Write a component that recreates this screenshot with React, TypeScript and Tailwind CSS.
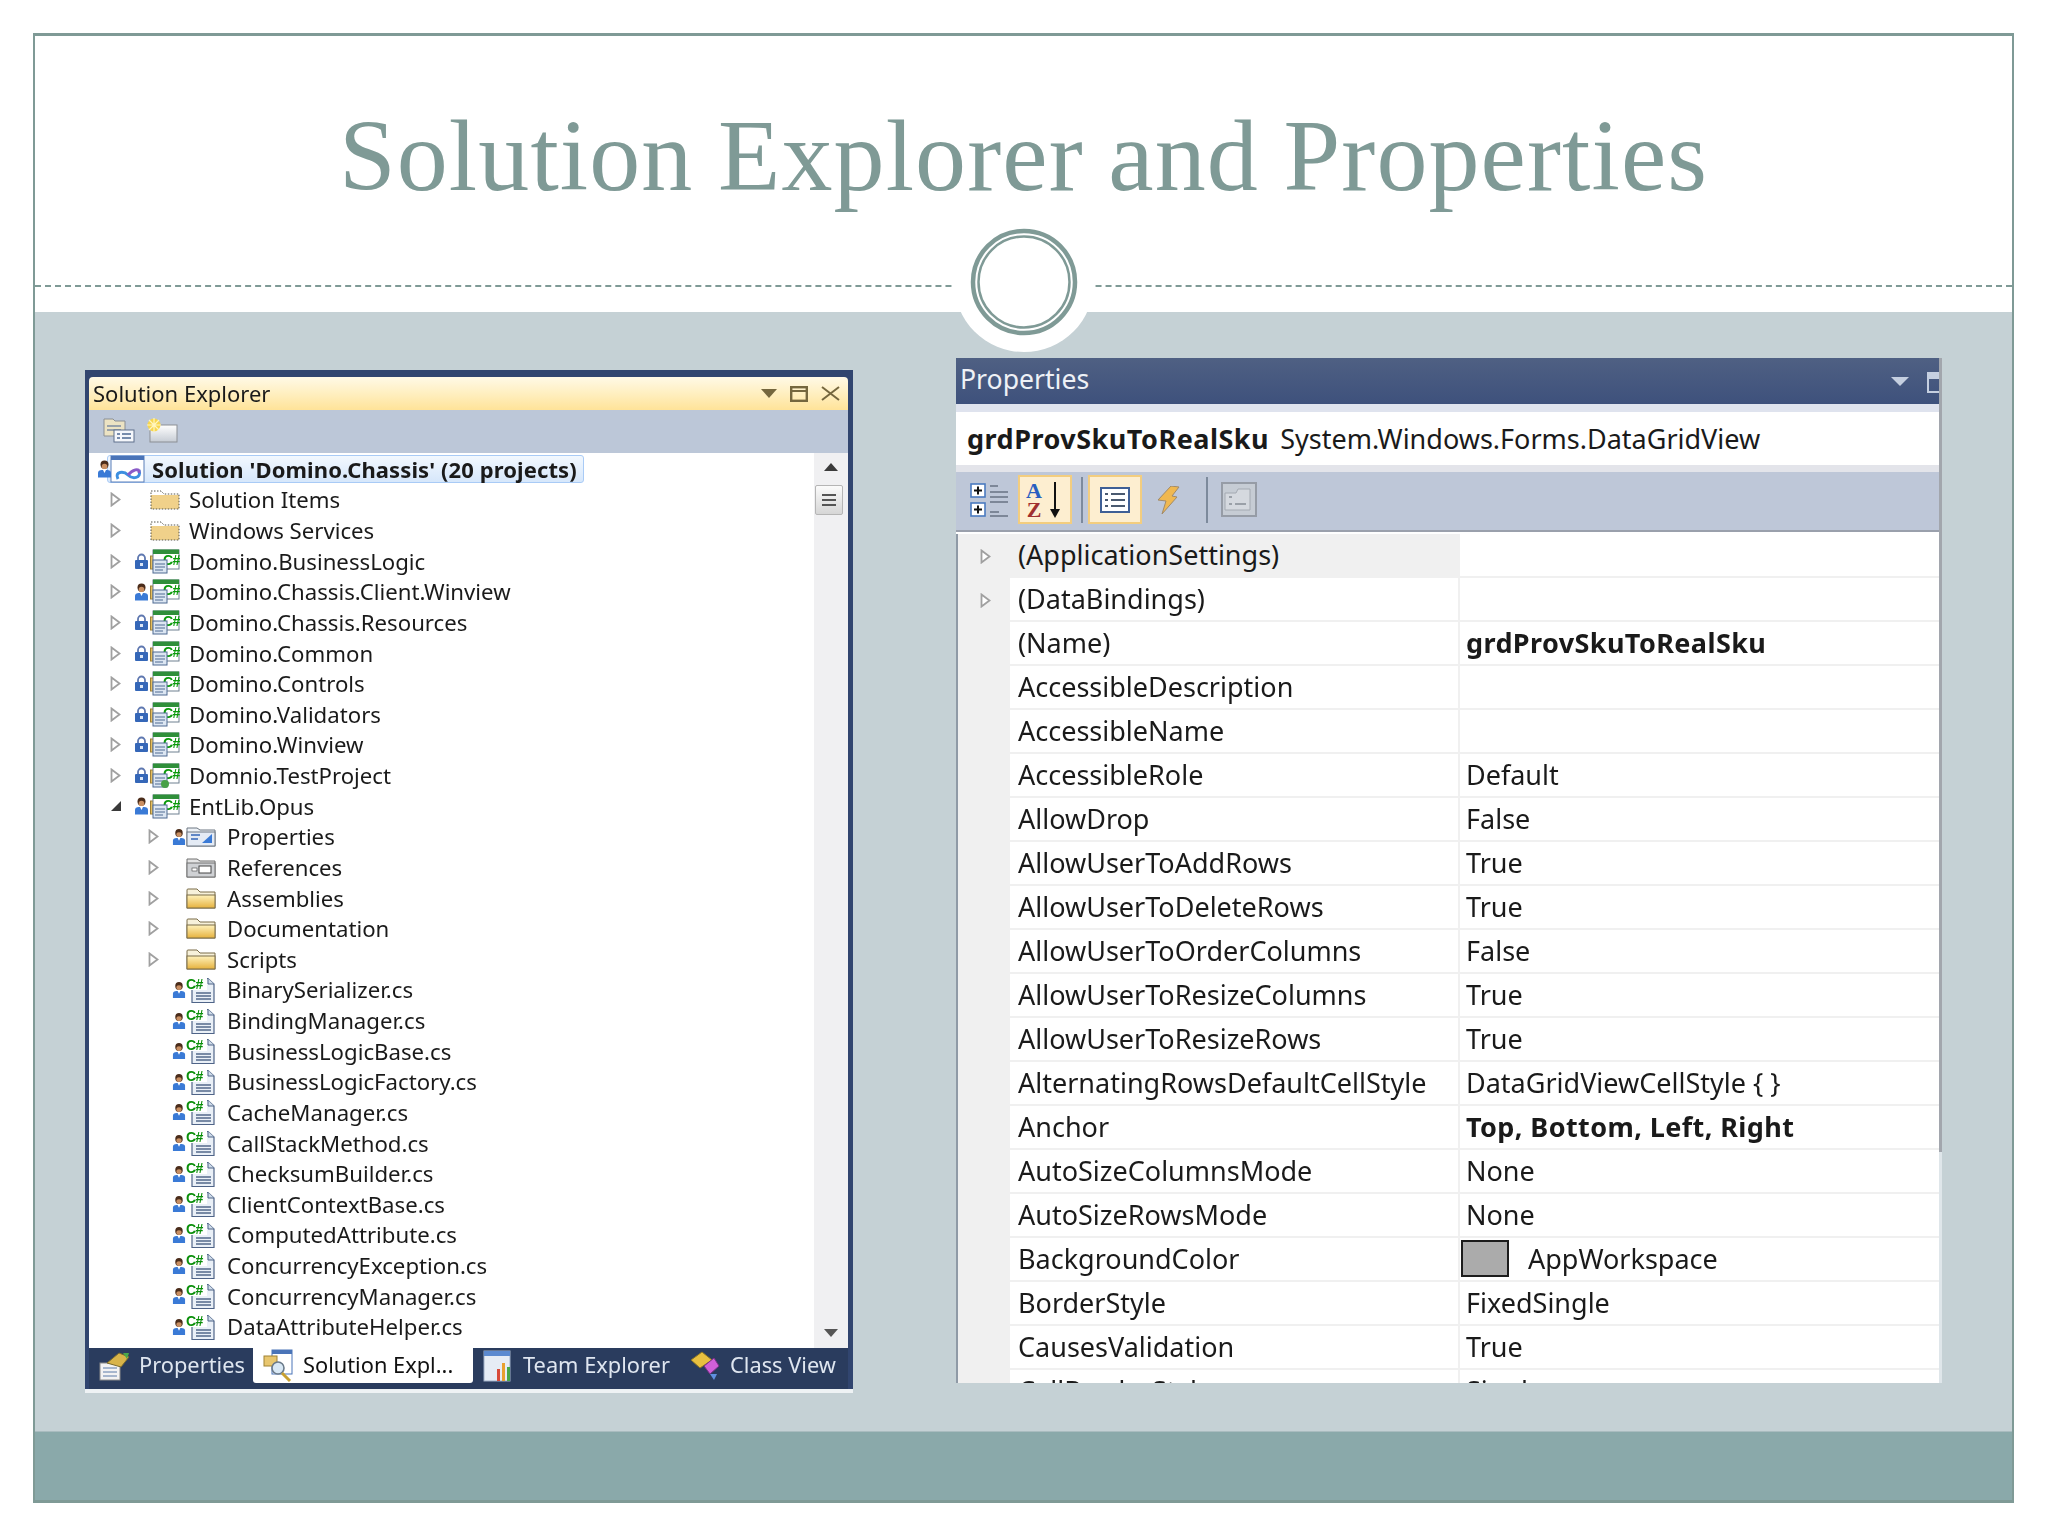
import React from "react";

const Expander = ({ open }: { open?: boolean }) =>
  open ? (
    <svg width="12" height="12" viewBox="0 0 12 12" className="block">
      <path d="M1 11 L11 11 L11 1 Z" fill="#3a3a3a" />
    </svg>
  ) : (
    <svg width="11" height="15" viewBox="0 0 11 15" className="block">
      <path d="M1.5 1.5 L9.5 7.5 L1.5 13.5 Z" fill="#fff" stroke="#a0a0a0" strokeWidth="1.8" />
    </svg>
  );

const Lock = () => (
  <svg width="15" height="17" viewBox="0 0 15 17" className="block">
    <path d="M4 8 V5 a3.5 3.5 0 0 1 7 0 V8" fill="none" stroke="#5f78b0" strokeWidth="1.8" />
    <rect x="1" y="7" width="13" height="9" rx="1" fill="#3567b8" />
    <rect x="6" y="10" width="3" height="3" fill="#dbe6f7" />
  </svg>
);

const User = () => (
  <svg width="15" height="18" viewBox="0 0 15 18" className="block">
    <ellipse cx="7.5" cy="4.6" rx="4" ry="4.2" fill="#4a2c1a" />
    <ellipse cx="7.5" cy="6.4" rx="2.8" ry="2.6" fill="#c98f62" />
    <path d="M1 17.5 V13 Q1 10 5 10 H10 Q14 10 14 13 V17.5 Z" fill="#3a7ad6" />
    <path d="M6 10 H9 L7.5 13 Z" fill="#fff" />
  </svg>
);

const CsProject = ({ gear }: { gear?: boolean }) => (
  <svg width="30" height="25" viewBox="0 0 30 25" className="block">
    <rect x="0.5" y="7" width="8" height="13" fill="#e6bf60" stroke="#a08238" />
    <rect x="3" y="1" width="26" height="19" fill="#fff" stroke="#6f8090" />
    <rect x="3" y="0.5" width="26" height="4.5" fill="#2f8f3a" />
    <text x="13" y="16" fontSize="14" fontWeight="700" fill="#0a9a0a" fontFamily="Liberation Sans, sans-serif" letterSpacing="-0.5">C#</text>
    <rect x="3" y="11" width="14" height="13" fill="#dce6f2" stroke="#4f6a92" />
    <path d="M5 15 H15 M5 18 H15 M5 21 H13" stroke="#4f6a92" strokeWidth="1.2" />
    {gear && <circle cx="15" cy="21" r="4" fill="#48a048" />}
  </svg>
);

const CsFile = () => (
  <svg width="29" height="26" viewBox="0 0 29 26" className="block">
    <path d="M6 1.5 H22 L28 7 V25.5 H6 Z" fill="#eaf0f7" stroke="#4f6488" strokeWidth="1.2" />
    <path d="M22 1.5 V7 H28" fill="#cfdcea" stroke="#4f6488" />
    <path d="M10 16 H25 M10 19 H25 M10 22 H25" stroke="#53688a" strokeWidth="1.4" />
    <rect x="0" y="1" width="21" height="12" fill="#fff" />
    <text x="0" y="12" fontSize="14" fontWeight="700" fill="#0a8f0a" fontFamily="Liberation Sans, sans-serif" letterSpacing="-0.5">C#</text>
  </svg>
);

const FolderIcon = () => (
  <svg width="30" height="21" viewBox="0 0 30 21" className="block">
    <defs>
      <linearGradient id="fg" x1="0" y1="0" x2="0" y2="1">
        <stop offset="0" stopColor="#fff2bc" />
        <stop offset="1" stopColor="#e6b23e" />
      </linearGradient>
    </defs>
    <path d="M1 20 V2 Q1 1 2 1 H11 L14 4 H29 V20 Z" fill="#f7f1da" stroke="#7a6c48" />
    <rect x="1" y="7" width="28" height="13" fill="url(#fg)" stroke="#7a6c48" />
  </svg>
);

const DottedFolder = () => (
  <svg width="30" height="21" viewBox="0 0 30 21" className="block">
    <rect x="1" y="6" width="28" height="14" fill="#f0d18a" />
    <path d="M1 20 V2 H11 L14 5 H29 V20 Z" fill="none" stroke="#55554a" strokeDasharray="1.5 1.5" />
  </svg>
);

const PropsFolder = () => (
  <svg width="30" height="21" viewBox="0 0 30 21" className="block">
    <path d="M1 20 V2 H11 L14 4 H29 V20 Z" fill="#eef2f7" stroke="#6d7782" />
    <rect x="1" y="6" width="28" height="14" fill="#e4ebf5" stroke="#6d7782" />
    <path d="M5 9 H14 M5 13 H12" stroke="#3567b8" strokeWidth="1.6" />
    <path d="M16 17 L26 8 V17 Z" fill="#3a7ad6" />
  </svg>
);

const RefsFolder = () => (
  <svg width="30" height="21" viewBox="0 0 30 21" className="block">
    <path d="M1 20 V2 H11 L14 4 H29 V20 Z" fill="#e4e4e4" stroke="#707070" />
    <rect x="1" y="6" width="28" height="14" fill="#cfd1d4" stroke="#707070" />
    <rect x="13" y="9" width="12" height="7" fill="#fff" stroke="#444" />
    <rect x="6" y="11" width="5" height="3" fill="#fff" stroke="#444" strokeWidth="0.6" />
  </svg>
);

const SolutionIcon = () => (
  <svg width="36" height="28" viewBox="0 0 36 28" className="block">
    <rect x="1" y="1" width="33" height="26" fill="#fff" stroke="#5b7fb8" />
    <rect x="1" y="1" width="33" height="4" fill="#4a74b8" />
    <path d="M8 24 C4 16 14 16 18 20 C22 24 32 24 29 15" fill="none" stroke="#3d8fe0" strokeWidth="3" />
    <path d="M18 20 C22 15 30 12 29 18" fill="none" stroke="#8a5bc8" strokeWidth="3" />
  </svg>
);

type Kind = "cs" | "file" | "folder" | "dotted" | "props" | "refs";
type Status = "lock" | "user" | null;
interface TreeRow { label: string; level: 1 | 2; icon: Kind; status: Status; exp: boolean; open?: boolean; gear?: boolean }

const rows: TreeRow[] = [
  { label: "Solution Items", level: 1, icon: "dotted", status: null, exp: true },
  { label: "Windows Services", level: 1, icon: "dotted", status: null, exp: true },
  { label: "Domino.BusinessLogic", level: 1, icon: "cs", status: "lock", exp: true },
  { label: "Domino.Chassis.Client.Winview", level: 1, icon: "cs", status: "user", exp: true },
  { label: "Domino.Chassis.Resources", level: 1, icon: "cs", status: "lock", exp: true },
  { label: "Domino.Common", level: 1, icon: "cs", status: "lock", exp: true },
  { label: "Domino.Controls", level: 1, icon: "cs", status: "lock", exp: true },
  { label: "Domino.Validators", level: 1, icon: "cs", status: "lock", exp: true },
  { label: "Domino.Winview", level: 1, icon: "cs", status: "lock", exp: true },
  { label: "Domnio.TestProject", level: 1, icon: "cs", status: "lock", exp: true, gear: true },
  { label: "EntLib.Opus", level: 1, icon: "cs", status: "user", exp: true, open: true },
  { label: "Properties", level: 2, icon: "props", status: "user", exp: true },
  { label: "References", level: 2, icon: "refs", status: null, exp: true },
  { label: "Assemblies", level: 2, icon: "folder", status: null, exp: true },
  { label: "Documentation", level: 2, icon: "folder", status: null, exp: true },
  { label: "Scripts", level: 2, icon: "folder", status: null, exp: true },
  ...[
    "BinarySerializer.cs", "BindingManager.cs", "BusinessLogicBase.cs", "BusinessLogicFactory.cs",
    "CacheManager.cs", "CallStackMethod.cs", "ChecksumBuilder.cs", "ClientContextBase.cs",
    "ComputedAttribute.cs", "ConcurrencyException.cs", "ConcurrencyManager.cs", "DataAttributeHelper.cs",
  ].map((label): TreeRow => ({ label, level: 2, icon: "file", status: "user", exp: false })),
];

const RowIcon = ({ kind, gear }: { kind: Kind; gear?: boolean }) => {
  if (kind === "cs") return <CsProject gear={gear} />;
  if (kind === "file") return <CsFile />;
  if (kind === "dotted") return <DottedFolder />;
  if (kind === "props") return <PropsFolder />;
  if (kind === "refs") return <RefsFolder />;
  return <FolderIcon />;
};

const Row = ({ r }: { r: TreeRow }) => {
  const l1 = r.level === 1;
  return (
    <div className={`flex h-[30.64px] shrink-0 items-center ${l1 ? "pl-[21px]" : "pl-[59px]"}`}>
      <div className="flex w-[24px] items-center">{r.exp && <Expander open={r.open} />}</div>
      <div className={`flex items-center ${l1 ? "w-[16px]" : "w-[14px]"}`}>
        {r.status === "lock" && <Lock />}
        {r.status === "user" && <User />}
      </div>
      <div className={`flex items-center ${l1 ? "w-[39px]" : "w-[41px]"}`}>
        <RowIcon kind={r.icon} gear={r.gear} />
      </div>
      <span className="whitespace-nowrap">{r.label}</span>
    </div>
  );
};

const TabPropsIcon = () => (
  <svg width="31" height="30" viewBox="0 0 31 30" className="block">
    <rect x="1" y="12" width="20" height="17" fill="#f3f3f3" stroke="#8a8a8a" />
    <path d="M4 17 H18 M4 21 H18 M4 25 H18" stroke="#5a7aa8" />
    <path d="M8 12 L20 2 L30 6 L22 16 Z" fill="#d8b44a" stroke="#7a6a2c" />
    <path d="M24 2 L30 2 L28 8 Z" fill="#4aa84a" />
  </svg>
);
const TabSolutionIcon = () => (
  <svg width="31" height="34" viewBox="0 0 31 34" className="block">
    <rect x="9" y="1" width="20" height="24" fill="#fff" stroke="#4a74b8" />
    <rect x="9" y="1" width="20" height="4" fill="#4a74b8" />
    <rect x="1" y="7" width="13" height="10" fill="#e8c66e" stroke="#a08232" />
    <circle cx="15" cy="19" r="6" fill="#d8e8f5" stroke="#6a7a8a" strokeWidth="1.6" />
    <path d="M19 24 L27 32" stroke="#c8a030" strokeWidth="3" />
  </svg>
);
const TabTeamIcon = () => (
  <svg width="32" height="34" viewBox="0 0 32 34" className="block">
    <rect x="1" y="2" width="26" height="30" fill="#e6ecf5" stroke="#9fb0c8" />
    <rect x="1" y="2" width="26" height="5" fill="#5c8ad0" />
    <rect x="14" y="20" width="3" height="12" fill="#d84a3a" />
    <rect x="19" y="14" width="3" height="18" fill="#e8a030" />
    <rect x="24" y="18" width="3" height="14" fill="#48a848" />
  </svg>
);
const TabClassIcon = () => (
  <svg width="30" height="32" viewBox="0 0 30 32" className="block">
    <path d="M1 10 L12 2 L22 10 L10 18 Z" fill="#e8c040" stroke="#8a7424" />
    <path d="M14 16 L24 8 L29 16 L20 24 Z" fill="#d060d8" stroke="#7a3088" />
    <path d="M20 24 L24 30 L27 24 Z" fill="#6090e0" />
  </svg>
);

const Tab = ({ w, active, text, icon, gap }: { w: string; active?: boolean; text: string; icon: React.ReactNode; gap: string }) => (
  <div className={`flex h-[35px] items-center pl-[10px] text-[21.8px] ${w} ${gap} ${active ? "rounded-b-[3px] bg-white text-[#111]" : "text-[#dfe6f0]"}`}>
    {icon}
    <span className="-mt-[2px] whitespace-nowrap">{text}</span>
  </div>
);

const SolutionExplorer = () => (
  <div className="mt-[58px] ml-[50px] box-content w-[768px] border-b-[4px] border-[#eef2f4] blur-[0.5px] font-['Noto_Sans',sans-serif] text-[22.2px] text-[#1a1a1a]" style={{ lineHeight: "normal" }}>
    <div className="flex h-[1019px] flex-col bg-[#31456f] pt-[7px] pr-[5px] pl-[4px]">
      <div className="flex h-[33px] shrink-0 items-center justify-between rounded-t-[4px] bg-gradient-to-b from-[#fff9e6] via-[#ffefc0] to-[#ffe398] pr-[8px] pl-[4px]">
        <span className="-mt-[2px] text-[22px]">Solution Explorer</span>
        <div className="flex items-center gap-[13px]">
          <svg width="16" height="9" viewBox="0 0 16 9" className="-ml-[2px] block"><path d="M0 0 H16 L8 9 Z" fill="#75673e" /></svg>
          <svg width="18" height="16" viewBox="0 0 18 16" className="block"><rect x="1.2" y="1.2" width="15.6" height="13.6" fill="none" stroke="#75673e" strokeWidth="2.4" /><path d="M1 5 H17" stroke="#75673e" strokeWidth="2" /></svg>
          <svg width="19" height="15" viewBox="0 0 19 15" className="block"><path d="M1 1 L18 14 M18 1 L1 14" stroke="#75673e" strokeWidth="2" /></svg>
        </div>
      </div>
      <div className="flex h-[43px] shrink-0 items-center gap-[11px] bg-[#bcc7d8] pb-[3px] pl-[14px]">
        <svg width="32" height="26" viewBox="0 0 32 26" className="block">
          <path d="M1 19 V2 H10 L12 4 H22 V19 Z" fill="#ece3c3" stroke="#8b8f94" />
          <path d="M4 9 H18 M4 13 H18" stroke="#7d8da2" strokeWidth="1.5" />
          <rect x="11" y="13" width="20" height="12" fill="#f5f7fb" stroke="#5f718c" />
          <path d="M14 17 H17 M19 17 H28 M14 21 H17 M19 21 H28" stroke="#4e6a92" strokeWidth="1.4" />
        </svg>
        <svg width="32" height="25" viewBox="0 0 32 25" className="block">
          <defs><linearGradient id="nf" x1="0" y1="0" x2="0" y2="1"><stop offset="0" stopColor="#fff" /><stop offset="1" stopColor="#c6ccd4" /></linearGradient></defs>
          <rect x="4" y="7" width="27" height="17" fill="url(#nf)" stroke="#8b8f94" />
          <circle cx="8" cy="7" r="6.5" fill="#f7d64e" />
          <path d="M8 0 V14 M1 7 H15 M3 2 L13 12 M13 2 L3 12" stroke="#fff6c0" strokeWidth="1.2" />
        </svg>
      </div>
      <div className="flex h-[895px] shrink-0 overflow-hidden bg-white">
        <div className="flex min-w-0 flex-1 flex-col overflow-hidden pt-[1px]">
          <div className="flex h-[30.64px] shrink-0 items-center pl-[8px]">
            <div className="relative z-10"><User /></div>
            <div className="-ml-[5px] flex h-[28px] w-[477px] items-center rounded-[3px] border border-[#a9cbf6] bg-gradient-to-b from-[#f2f8fe] to-[#d6e7fb] pl-[2px]">
              <SolutionIcon />
              <span className="ml-[6px] text-[22px] font-bold tracking-[0.1px] whitespace-nowrap">Solution 'Domino.Chassis' (20 projects)</span>
            </div>
          </div>
          {rows.map((r) => (<Row key={r.label} r={r} />))}
        </div>
        <div className="flex w-[34px] shrink-0 flex-col items-center bg-[#f0f0f2] pt-[10px]">
          <svg width="14" height="8" viewBox="0 0 14 8" className="block"><path d="M0 8 L7 0 L14 8 Z" fill="#3b3b3b" /></svg>
          <div className="mt-[14px] mr-[5px] flex h-[30px] w-[28px] flex-col items-center justify-center gap-[3px] rounded-[2px] border border-[#b5b5b5] bg-gradient-to-b from-[#fbfbfb] to-[#d6d6d6]">
            <div className="h-[2px] w-[14px] bg-[#555]" /><div className="h-[2px] w-[14px] bg-[#555]" /><div className="h-[2px] w-[14px] bg-[#555]" />
          </div>
          <div className="flex-1" />
          <svg width="14" height="8" viewBox="0 0 14 8" className="mb-[11px] block"><path d="M0 0 L14 0 L7 8 Z" fill="#555" /></svg>
        </div>
      </div>
      <div className="flex h-[41px] shrink-0 bg-[#2a3c5e]">
        <Tab w="w-[164px]" gap="gap-[9px]" text="Properties" icon={<TabPropsIcon />} />
        <Tab w="w-[220px]" gap="gap-[9px]" active text="Solution Expl..." icon={<TabSolutionIcon />} />
        <Tab w="w-[207px]" gap="gap-[8px]" text="Team Explorer" icon={<TabTeamIcon />} />
        <Tab w="w-[160px]" gap="gap-[10px]" text="Class View" icon={<TabClassIcon />} />
      </div>
    </div>
  </div>
);

interface Prop { n: string; v?: string; b?: boolean; swatch?: boolean; exp?: boolean; sel?: boolean }
const props: Prop[] = [
  { n: "(ApplicationSettings)", exp: true, sel: true },
  { n: "(DataBindings)", exp: true },
  { n: "(Name)", v: "grdProvSkuToRealSku", b: true },
  { n: "AccessibleDescription" },
  { n: "AccessibleName" },
  { n: "AccessibleRole", v: "Default" },
  { n: "AllowDrop", v: "False" },
  { n: "AllowUserToAddRows", v: "True" },
  { n: "AllowUserToDeleteRows", v: "True" },
  { n: "AllowUserToOrderColumns", v: "False" },
  { n: "AllowUserToResizeColumns", v: "True" },
  { n: "AllowUserToResizeRows", v: "True" },
  { n: "AlternatingRowsDefaultCellStyle", v: "DataGridViewCellStyle { }" },
  { n: "Anchor", v: "Top, Bottom, Left, Right", b: true },
  { n: "AutoSizeColumnsMode", v: "None" },
  { n: "AutoSizeRowsMode", v: "None" },
  { n: "BackgroundColor", v: "AppWorkspace", swatch: true },
  { n: "BorderStyle", v: "FixedSingle" },
  { n: "CausesValidation", v: "True" },
  { n: "CellBorderStyle", v: "Single" },
];

const PropRow = ({ p }: { p: Prop }) => (
  <div className="flex h-[44px] shrink-0">
    <div className="flex w-[52px] shrink-0 items-center bg-[#f0f0f0] pl-[22px]">{p.exp && <Expander />}</div>
    <div className={`flex w-[448px] shrink-0 items-center border-b-2 border-[#f0f0f0] pb-[2px] pl-[8px] whitespace-nowrap ${p.sel ? "bg-[#f0f0f0]" : "bg-white"}`}>
      {p.n}
    </div>
    <div className="w-[2px] shrink-0 bg-[#f0f0f0]" />
    <div className={`flex min-w-0 flex-1 items-center border-b-2 border-[#f0f0f0] bg-white pb-[2px] whitespace-nowrap ${p.swatch ? "pl-[1px]" : "pl-[6px]"} ${p.b ? "font-bold tracking-[0.4px]" : ""}`}>
      {p.swatch && <div className="mr-[19px] h-[37px] w-[48px] shrink-0 border-2 border-[#1c1c1c] bg-[#ababab]" />}
      {p.v}
    </div>
  </div>
);

const Properties = () => (
  <div className="mt-[46px] ml-[103px] flex h-[1025px] w-[990px] blur-[0.5px] font-['Noto_Sans',sans-serif] text-[27px] text-[#1a1a1a]" style={{ lineHeight: "normal" }}>
    <div className="flex min-w-0 flex-1 flex-col overflow-hidden">
      <div className="relative flex h-[46px] shrink-0 items-center bg-gradient-to-b from-[#4f6083] to-[#3e517c] pb-[4px] pl-[4px] text-[26.6px] text-[#eef1f6]">
        <span>Properties</span>
        <svg width="18" height="9" viewBox="0 0 18 9" className="absolute top-[19px] right-[30px] block"><path d="M0 0 H18 L9 9 Z" fill="#c5cfe0" /></svg>
        <div className="absolute top-[14px] -right-[8px] h-[21px] w-[20px] border-[2px] border-t-[7px] border-[#c5cfe0]" />
      </div>
      <div className="h-[8px] shrink-0 bg-[#dfe3ee]" />
      <div className="flex h-[53px] shrink-0 items-center gap-[11px] bg-white pl-[11px]">
        <span className="font-bold tracking-[0.5px]">grdProvSkuToRealSku</span>
        <span>System.Windows.Forms.DataGridView</span>
      </div>
      <div className="h-[7px] shrink-0 bg-[#e3e4ea]" />
      <div className="flex h-[60px] shrink-0 items-center border-b-2 border-[#9aa0ac] bg-[#bec7d8] pb-[3px] pl-[14px]">
        <svg width="39" height="34" viewBox="0 0 39 34" className="block">
          <rect x="1" y="1" width="14" height="13" fill="#fff" stroke="#4a7ac0" strokeWidth="1.6" />
          <path d="M4 7.5 H12 M8 3.5 V11.5" stroke="#111" strokeWidth="2" />
          <rect x="1" y="20" width="14" height="13" fill="#fff" stroke="#4a7ac0" strokeWidth="1.6" />
          <path d="M4 26.5 H12 M8 22.5 V30.5" stroke="#111" strokeWidth="2" />
          <path d="M20 3 H28 M20 9 H38 M20 14 H38 M20 19 H38 M20 29 H29 M20 33 H38" stroke="#7d8798" strokeWidth="1.8" />
        </svg>
        <div className="ml-[9px] flex h-[49px] w-[54px] shrink-0 items-center border-[2px] border-[#f3cd7f] bg-[#fdeed0] pl-[4px]">
          <svg width="38" height="38" viewBox="0 0 38 38" className="block">
            <text x="10" y="17" textAnchor="middle" fontSize="22" fontWeight="700" fill="#2a5fc0" fontFamily="Liberation Serif, serif">A</text>
            <text x="10" y="36" textAnchor="middle" fontSize="22" fontWeight="700" fill="#a03030" fontFamily="Liberation Serif, serif">Z</text>
            <path d="M31 1 V30" stroke="#111" strokeWidth="2" />
            <path d="M26 28 L31 37 L36 28 Z" fill="#111" />
          </svg>
        </div>
        <div className="ml-[9px] h-[46px] w-[2px] shrink-0 bg-[#7d8a9c]" />
        <div className="ml-[5px] flex h-[49px] w-[54px] shrink-0 items-center justify-center border-[2px] border-[#f3cd7f] bg-[#fdeed0]">
          <svg width="30" height="26" viewBox="0 0 30 26" className="block">
            <rect x="1" y="1" width="28" height="24" fill="#fff" stroke="#3f5f95" strokeWidth="2" />
            <path d="M5 7 H8 M11 7 H25 M5 13 H8 M11 13 H25 M5 19 H8 M11 19 H25" stroke="#4a5a70" strokeWidth="2" />
          </svg>
        </div>
        <div className="ml-[15px] w-[23px] shrink-0">
          <svg width="23" height="28" viewBox="0 0 23 28" className="block">
            <path d="M14 0 L22 1 L15 10 L20 11 L5 28 L9 15 L1 14 Z" fill="#f0b850" stroke="#a08a6a" strokeWidth="1" />
          </svg>
        </div>
        <div className="ml-[26px] h-[46px] w-[2px] shrink-0 bg-[#7d8a9c]" />
        <svg width="36" height="35" viewBox="0 0 36 35" className="ml-[13px] block">
          <rect x="1" y="1" width="34" height="33" fill="#c6ccd4" stroke="#969ca6" strokeWidth="2" />
          <path d="M4 11 H15 L17 7 H29 V28 H4 Z" fill="#d5d9df" stroke="#a4aab2" />
          <path d="M8 15 H11 M8 22 H11 M14 22 H25" stroke="#9aa0a8" strokeWidth="2" />
        </svg>
      </div>
      <div className="h-[2px] shrink-0 bg-white" />
      <div className="flex min-h-0 flex-1 flex-col overflow-hidden border-l-2 border-[#8f9aa6]">
        {props.map((p) => (<PropRow key={p.n} p={p} />))}
      </div>
    </div>
    <div className="flex w-[7px] shrink-0 flex-col">
      <div className="h-[794px] w-[3px] bg-[#a2a6ad]" />
      <div className="w-[3px] flex-1 bg-[#dfe6ea]" />
    </div>
  </div>
);

export default function App() {
  return (
    <div className="h-[1536px] w-[2048px] overflow-hidden bg-white pt-[33px] pl-[33px]">
      <div className="relative flex h-[1470px] w-[1981px] flex-col border-x-2 border-t-[3px] border-b-[3px] border-[#7f9a96]">
        <div className="h-[251px] shrink-0 border-b-2 border-dashed border-[#7f9a96] pt-[70px] text-center font-['Liberation_Serif',serif] text-[102px] leading-[100px] tracking-[1.1px] [word-spacing:-2px] text-[#7f9a96] blur-[0.4px]">
          Solution Explorer and Properties
        </div>
        <div className="h-[25px] shrink-0 bg-white" />
        <div className="flex min-h-0 flex-1 items-start bg-[#c5d1d5]">
          <SolutionExplorer />
          <Properties />
        </div>
        <div className="h-[69px] shrink-0 border-t border-[#a9bcbf] bg-[#8aa9aa]" />
        <svg width="140" height="140" viewBox="0 0 140 140" className="absolute top-[176px] left-[919px] block">
          <circle cx="70" cy="70" r="70" fill="#fff" />
          <circle cx="70" cy="70" r="51" fill="none" stroke="#7f9a96" strokeWidth="4.5" />
          <circle cx="70" cy="70" r="45.5" fill="none" stroke="#7f9a96" strokeWidth="2.5" />
        </svg>
      </div>
    </div>
  );
}
